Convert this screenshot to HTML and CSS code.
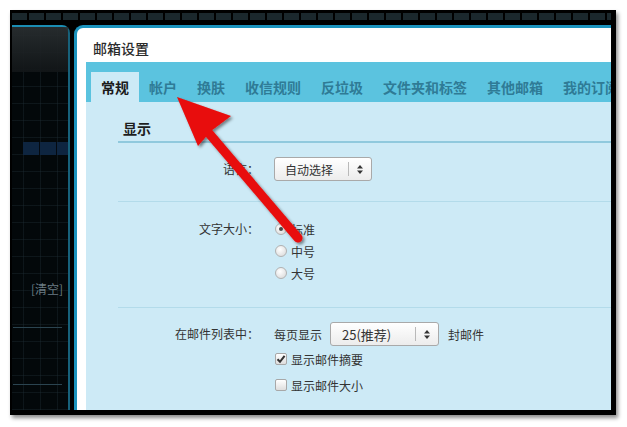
FILE: index.html
```html
<!DOCTYPE html>
<html lang="zh-CN">
<head>
    <meta charset="UTF-8">
    <title>邮箱设置</title>
    <link rel="stylesheet" href="styles.css">
</head>
<body>
    <div class="shot">
        <div class="topbar"></div>
        <div class="main">
            <div class="sidebar">
                <div class="side-top"></div>
                <div class="side-sel"></div>
                <div class="side-clear">[清空]</div>
                <div class="side-line"></div>
                <div class="side-line second"></div>
            </div>

            <div class="dialog">
                <div class="dialog-title">邮箱设置</div>
                <div class="panel">
                    <ul class="tabs">
                        <li class="active">常规</li>
                        <li>帐户</li>
                        <li>换肤</li>
                        <li>收信规则</li>
                        <li>反垃圾</li>
                        <li>文件夹和标签</li>
                        <li>其他邮箱</li>
                        <li>我的订阅</li>
                    </ul>

                    <div class="content">
                        <div class="section">
                            <h3>显示</h3>

                            <div class="field">
                                <label class="field-label">语言：</label>
                                <div class="field-body">
                                    <div class="select select-lang">
                                        <span class="select-text">自动选择</span>
                                        <span class="select-arrow">
                                            <svg width="6" height="9" viewBox="0 0 6 9"><polygon points="0,3.5 3,0 6,3.5" fill="#333"/><polygon points="0,5.5 6,5.5 3,9" fill="#333"/></svg>
                                        </span>
                                    </div>
                                </div>
                            </div>

                            <div class="field field-size">
                                <label class="field-label">文字大小：</label>
                                <div class="field-body">
                                    <div class="option"><span class="radio checked"></span>标准</div>
                                    <div class="option"><span class="radio"></span>中号</div>
                                    <div class="option"><span class="radio"></span>大号</div>
                                </div>
                            </div>

                            <div class="field field-list">
                                <label class="field-label">在邮件列表中：</label>
                                <div class="field-body">
                                    <div class="per-page">
                                        每页显示
                                        <div class="select select-count">
                                            <span class="select-text">25(推荐)</span>
                                            <span class="select-arrow">
                                                <svg width="6" height="9" viewBox="0 0 6 9"><polygon points="0,3.5 3,0 6,3.5" fill="#333"/><polygon points="0,5.5 6,5.5 3,9" fill="#333"/></svg>
                                            </span>
                                        </div>
                                        封邮件
                                    </div>
                                    <div class="option check-row">
                                        <span class="checkbox checked">
                                            <svg width="10" height="10" viewBox="0 0 10 10"><path d="M1.5 5.2 L4 7.8 L8.6 1.8" fill="none" stroke="#333" stroke-width="2"/></svg>
                                        </span>显示邮件摘要
                                    </div>
                                    <div class="option check-row"><span class="checkbox"></span>显示邮件大小</div>
                                </div>
                            </div>
                        </div>
                    </div>
                </div>
            </div>
        </div>
    </div>

    <!-- 标注箭头 -->
    <svg class="pointer" width="627" height="427" viewBox="0 0 627 427">
        <defs>
            <filter id="arrowShadow" x="-20%" y="-20%" width="140%" height="140%">
                <feDropShadow dx="2" dy="2" stdDeviation="1.5" flood-color="#000" flood-opacity="0.45"/>
            </filter>
        </defs>
        <g filter="url(#arrowShadow)" fill="#e80a0a">
            <line x1="207" y1="131" x2="298" y2="238" stroke="#e80a0a" stroke-width="9" stroke-linecap="round"/>
            <polygon points="177,97 231,116 211,131 198,146"/>
        </g>
    </svg>
</body>
</html>
```

FILE: styles.css
```css
body {
    margin: 0;
    position: relative;
    width: 627px;
    height: 427px;
    background-color: #fff;
    font-family: "Noto Sans CJK SC", "Liberation Sans", sans-serif;
    font-size: 12px;
    color: #333;
    overflow: hidden;
}

.shot {
    box-sizing: border-box;
    width: 606px;
    height: 405px;
    margin: 10px 0 0 10px;
    border: 2px solid #000;
    border-right-width: 5px;
    border-bottom-width: 5px;
    box-shadow: 2px 3px 4px rgba(0, 0, 0, 0.45);
    background-color: #000;
    display: flex;
    flex-direction: column;
    overflow: hidden;
}

.topbar {
    height: 13px;
    flex-shrink: 0;
    background: linear-gradient(90deg, #1b282d 15px, #000 15px) 0 1px / 17px 7px repeat-x, #000;
}

.main {
    flex: 1;
    display: flex;
    gap: 4px;
    min-height: 0;
}

/* 左侧深色栏 */
.sidebar {
    width: 56px;
    flex-shrink: 0;
    border-top: 2px solid #1b8db3;
    border-right: 2px solid #17617a;
    border-top-right-radius: 8px;
    background:
        linear-gradient(90deg, rgba(34, 50, 56, 0.35) 1px, transparent 1px) 11px 0 / 17px 17px,
        linear-gradient(rgba(34, 50, 56, 0.35) 1px, transparent 1px) 0 8px / 17px 17px,
        #03080a;
    display: flex;
    flex-direction: column;
}

.side-top {
    height: 45px;
    background: linear-gradient(#2a2f31, #121618);
    opacity: 0.9;
}

.side-sel {
    height: 13px;
    margin: 70px 0 0 11px;
    background: linear-gradient(90deg, #0e2540 16px, #040a10 16px) 0 0 / 17px 13px repeat-x;
}

.side-clear {
    margin-top: 126px;
    padding-right: 5px;
    line-height: 15px;
    text-align: right;
    color: #6b7c83;
}

.side-line {
    height: 1px;
    margin: 31px 6px 0 1px;
    background-color: #2b4450;
}

.side-line.second {
    margin-top: 56px;
}

/* 对话框 */
.dialog {
    flex: 1;
    min-width: 0;
    border-top: 3px solid #1c93bd;
    border-left: 3px solid #1c93bd;
    border-top-left-radius: 9px;
    background-color: #fff;
    display: flex;
    flex-direction: column;
}

.dialog-title {
    padding: 11px 0 0 16px;
    line-height: 18px;
    font-size: 14px;
    font-weight: 500;
    color: #2b2b2b;
}

.panel {
    flex: 1;
    margin: 5px 0 0 9px;
    background-color: #cdeaf6;
}

.tabs {
    display: flex;
    margin: 0;
    padding: 10px 0 0 5px;
    list-style: none;
    background-color: #5bc3df;
    white-space: nowrap;
    overflow: hidden;
}

.tabs li {
    flex-shrink: 0;
    padding: 0 10px;
    line-height: 30px;
    font-size: 14px;
    font-weight: bold;
    color: #2f7b96;
}

.tabs li.active {
    background-color: #cdeaf6;
    color: #1b1b1b;
}

.section {
    margin-left: 32px;
    padding-top: 16px;
}

.section h3 {
    margin: 0;
    padding: 0 0 3px 5px;
    line-height: 20px;
    font-size: 14px;
    color: #1e1e1e;
    border-bottom: 2px solid #90c9dd;
}

.field {
    display: grid;
    grid-template-columns: 141px 1fr;
    column-gap: 15px;
    padding: 14px 0 20px;
    border-bottom: 1px solid #b3dbea;
}

.field-label {
    text-align: right;
    line-height: 24px;
    color: #333;
}

.field-size {
    padding: 16px 0 23px;
}

.field-size .field-label {
    line-height: 22px;
}

.field-list {
    padding-bottom: 20px;
}

/* 下拉框 */
.select {
    box-sizing: border-box;
    height: 24px;
    display: flex;
    align-items: center;
    border: 1px solid #a9a9a9;
    border-radius: 3px;
    background: linear-gradient(#fff, #ececec);
}

.select-lang {
    width: 98px;
}

.select-count {
    width: 109px;
    margin: 0 9px 0 8px;
}

.select-text {
    flex: 1;
    padding-left: 10px;
    white-space: nowrap;
    color: #333;
}

.select-count .select-text {
    padding-left: 11px;
    font-size: 13px;
}

.select-arrow {
    width: 22px;
    height: 14px;
    display: flex;
    align-items: center;
    justify-content: center;
    border-left: 1px solid #b9b9b9;
}

.per-page {
    display: flex;
    align-items: center;
    height: 24px;
    white-space: nowrap;
}

/* 单选和复选 */
.option {
    display: flex;
    align-items: center;
    height: 22px;
    white-space: nowrap;
}

.check-row {
    height: 26px;
}

.radio {
    box-sizing: border-box;
    width: 12px;
    height: 12px;
    margin: 0 4px 0 1px;
    border: 1px solid #b1b1b1;
    border-radius: 50%;
    background: radial-gradient(circle at 40% 35%, #fff, #d6d6d6);
    position: relative;
}

.radio.checked::after {
    content: "";
    position: absolute;
    left: 3px;
    top: 3px;
    width: 4px;
    height: 4px;
    border-radius: 50%;
    background-color: #4a4a4a;
}

.checkbox {
    box-sizing: border-box;
    width: 12px;
    height: 12px;
    margin: 0 4px 0 1px;
    border: 1px solid #a8a8a8;
    border-radius: 2px;
    background: linear-gradient(#fff, #dedede);
    display: flex;
    align-items: center;
    justify-content: center;
}

.pointer {
    position: absolute;
    left: 0;
    top: 0;
    pointer-events: none;
}
```
